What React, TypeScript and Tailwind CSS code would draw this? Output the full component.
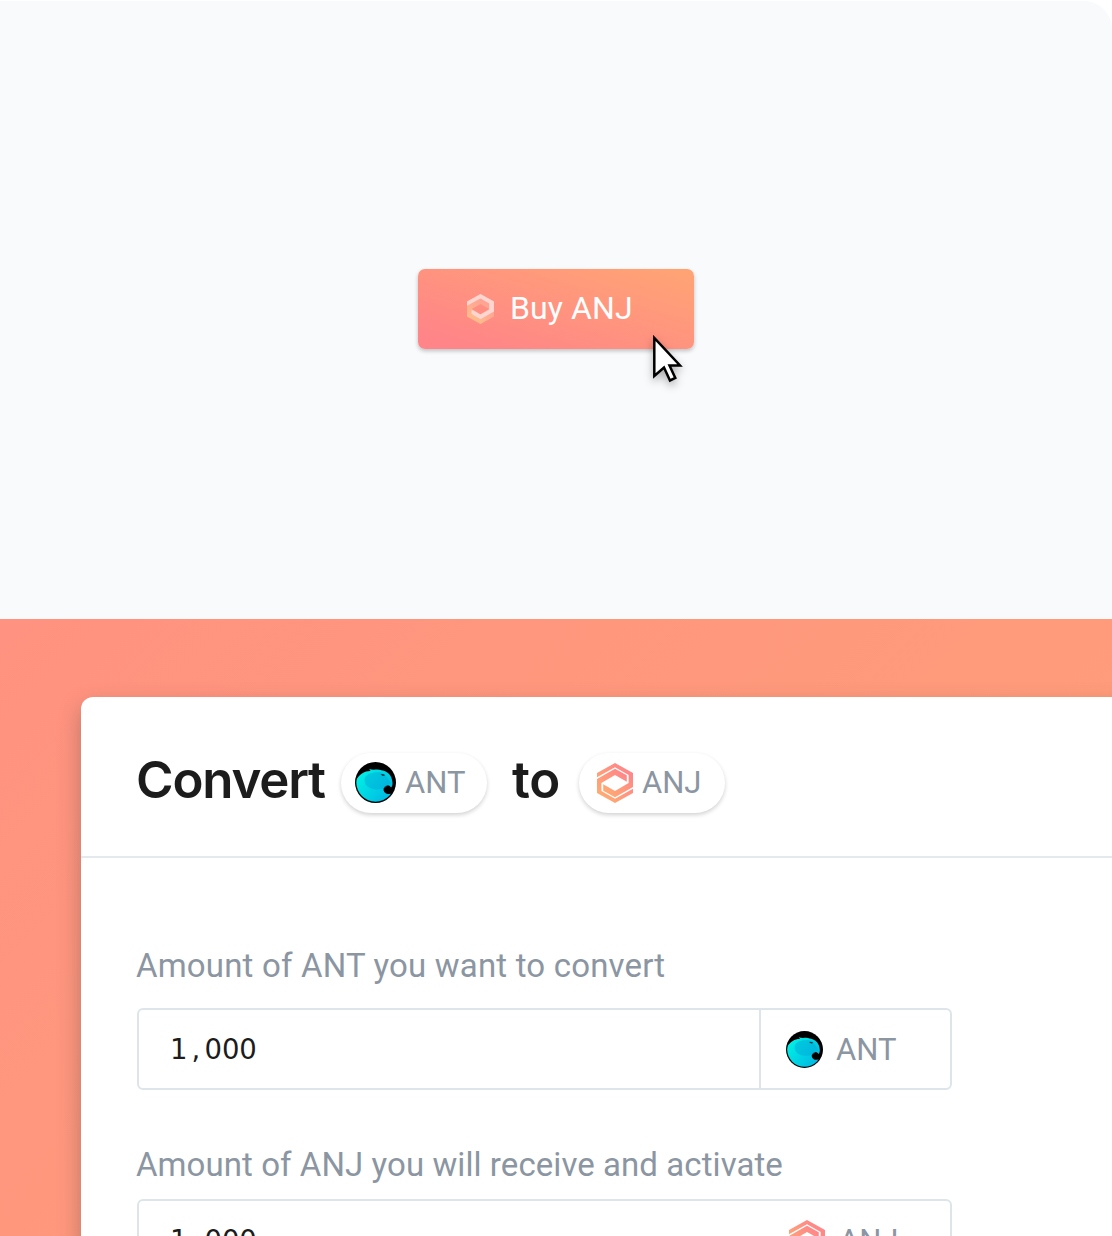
import React from "react";

function AnjIcon({ className, pale = false }: { className: string; pale?: boolean }) {
  const id = React.useId();
  return (
    <svg viewBox="0 0 107 120" className={className} preserveAspectRatio="none">
      <defs>
        <linearGradient id={id} x1="0.9" y1="0.1" x2="0.1" y2="0.9">
          <stop offset="0.15" stopColor="#ff8888" />
          <stop offset="1" stopColor="#ffae70" />
        </linearGradient>
        <linearGradient id={id + "b"} x1="0.8" y1="0.2" x2="0.3" y2="1">
          <stop offset="0" stopColor="#ff9f92" />
          <stop offset="0.5" stopColor="#ffac91" />
          <stop offset="1" stopColor="#ffc087" />
        </linearGradient>
      </defs>
      {pale ? (
        <>
          <path d="M0 30 53.5 0 107 30V90L53.5 120 0 90ZM19 60 53.5 81 88 60 53.5 40Z" fill={`url(#${id}b)`} fillRule="evenodd" />
          <path d="M0 30 53.5 0 107 30V70L53.5 101 18 80V62L53.5 82 88 62V38L53.5 18 0 47Z" fill="#ffd5cf" />
        </>
      ) : (
        <g fill={`url(#${id})`}>
          <path d="M0 30 53.5 0 107 30V72L53.5 103 18.5 83V64L53.5 84 94 60V36L53.5 12.5 0 43Z" />
          <path d="M107 90 53.5 120 0 90V48L53.5 17 88.5 37V56L53.5 36 13 60V84L53.5 107.5 107 77Z" />
        </g>
      )}
    </svg>
  );
}

function AntIcon({ className }: { className: string }) {
  const id = React.useId();
  return (
    <svg viewBox="0 0 124 124" className={className}>
      <defs>
        <linearGradient id={id} x1="0" y1="0.3" x2="0.9" y2="0.9">
          <stop offset="0" stopColor="#00f0e4" />
          <stop offset="1" stopColor="#00b4e4" />
        </linearGradient>
        <clipPath id={id + "c"}>
          <circle cx="62" cy="62" r="58" />
        </clipPath>
      </defs>
      <circle cx="62" cy="62" r="62" fill="#000" />
      <path
        d="M0 60C12 36 30 26 47 27L43 21C56 26 68 20 80 25C99 27 112 42 113 60Q115 72 109 77Q104 69 96 71C83 74 83 92 96 96Q106 98 124 92V124H0Z"
        fill={`url(#${id})`}
        clipPath={`url(#${id}c)`}
      />
      <path d="M29 54C30 36 50 30 78 31Q100 42 108 66C101 65 100 71 90 78Q60 90 39 75Q28 67 29 54Z" fill="#00a9d8" opacity=".5" />
      <path d="M77 37Q86 35 92 40L84 42Z" fill="#023c4b" />
    </svg>
  );
}

function Cursor() {
  return (
    <svg
      viewBox="0 0 34 52"
      className="absolute left-[234px] top-[64px] h-[52px] w-[34px] overflow-visible drop-shadow-[0_4px_4px_rgba(0,0,0,0.3)]"
    >
      <path d="M2.3 5V43L12 34.5 18 47.5 23.3 45 17.5 32.5H28Z" fill="#fff" stroke="#000" strokeWidth="2.5" />
    </svg>
  );
}

function Amount() {
  return (
    <span className="mt-0.5 flex font-['DejaVu_Sans'] text-[27.5px] leading-none text-[#1c1c1c]">
      {"1,000".split("").map((c, i) => (
        <span key={i} className="w-[17.3px] text-center">{c}</span>
      ))}
    </span>
  );
}

function Pill({ label, icon }: { label: string; icon: React.ReactNode }) {
  return (
    <span className="flex h-[60px] w-[146px] items-center rounded-full bg-white pl-[14px] font-['Roboto'] text-[31px] font-normal leading-10 tracking-normal text-[#8b96a2] shadow-[0_2px_4px_rgba(0,0,0,0.18)]">
      {icon}
      <span className="ml-[9px] mt-px">{label}</span>
    </span>
  );
}

export default function App() {
  return (
    <div className="h-[1236px] w-[1112px] overflow-hidden bg-white font-['Roboto',sans-serif]">
      <section className="h-[619px] pt-px">
        <div className="flex h-full justify-center rounded-tr-[28px] bg-[#f9fafc] pt-[268px]">
          <button className="relative flex h-20 w-[276px] items-center rounded-[7px] bg-[linear-gradient(17deg,#ff8588_10%,#ffa375_95%)] pl-12 text-white shadow-[0_2px_4px_rgba(0,0,0,0.24)]">
            <AnjIcon pale className="ml-px h-[30px] w-[27px]" />
            <span className="-mt-0.5 ml-[16px] text-[32px] leading-10 tracking-[0.1px] whitespace-nowrap">Buy ANJ</span>
            <Cursor />
          </button>
        </div>
      </section>

      <section className="h-[617px] overflow-hidden bg-[linear-gradient(135deg,#ff9280_0%,#ffa078_100%)] pl-[81px] pt-[78px]">
        <div className="h-[700px] w-[1200px] rounded-tl-[12px] bg-white shadow-[0_10px_22px_rgba(60,60,60,0.35)]">
          <header className="flex h-[161px] items-center border-b-2 border-[#e4e9ed] pl-[55px] pt-[12px]">
            <h1 className="flex items-center font-['Inter'] text-[51px] font-semibold leading-[60px] tracking-[-1.2px] text-[#1c1c1c]">
              <span className="-mt-[5px] w-[205px]">Convert</span>
              <Pill label="ANT" icon={<AntIcon className="h-[41px] w-[41px]" />} />
              <span className="-mt-[5px] ml-[25px] w-[67px] tracking-[-0.2px]">to</span>
              <Pill label="ANJ" icon={<AnjIcon className="ml-1 h-10 w-9" />} />
            </h1>
          </header>

          <div className="pl-[56px] pt-[88px]">
            <label className="-ml-px block h-[62px] text-[33px] leading-10 tracking-[0.18px] text-[#8b96a2]">Amount of ANT you want to convert</label>
            <div className="flex h-[82px] w-[815px] rounded-[6px] border-2 border-[#dde5eb]">
              <div className="flex w-[622px] items-center border-r-2 border-[#dde5eb] pl-[31px]">
                <Amount />
              </div>
              <div className="flex items-center pl-[25px]">
                <AntIcon className="h-[37px] w-[37px]" />
                <span className="ml-[13px] mt-[3px] text-[31px] text-[#8b96a2]">ANT</span>
              </div>
            </div>
            <label className="-ml-px mt-[55px] block h-[54px] text-[33px] leading-10 tracking-[0.07px] text-[#8b96a2]">
              Amount of ANJ you will receive and activate
            </label>
            <div className="flex h-[82px] w-[815px] rounded-[6px] border-2 border-[#dde5eb]">
              <div className="flex w-[622px] items-center pl-[31px]">
                <Amount />
              </div>
              <div className="flex items-center pl-7">
                <AnjIcon className="h-10 w-9" />
                <span className="ml-[14px] mt-[2px] text-[31px] text-[#8b96a2]">ANJ</span>
              </div>
            </div>
          </div>
        </div>
      </section>
    </div>
  );
}
